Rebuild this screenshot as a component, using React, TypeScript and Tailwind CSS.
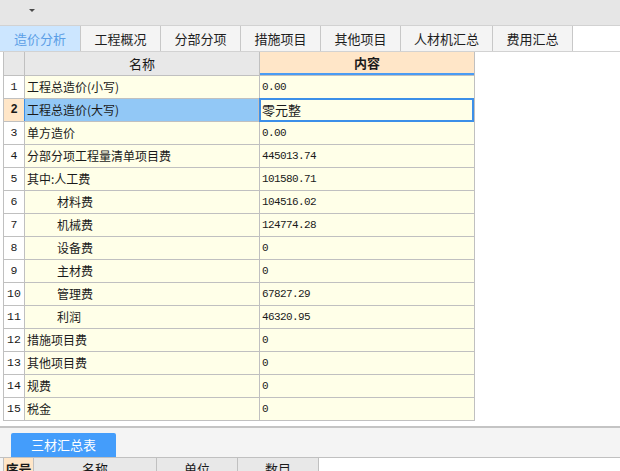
import React from "react"

const cjk = { fontFamily: '"Noto Sans CJK SC", "Noto Sans", sans-serif' }
const mono = { fontFamily: '"Liberation Mono", "Noto Sans CJK SC", monospace' }

const tabs = ["造价分析", "工程概况", "分部分项", "措施项目", "其他项目", "人材机汇总", "费用汇总"]
const tabWidths = ["w-[81px]", "w-[80px]", "w-[80px]", "w-[80px]", "w-[80px]", "w-[92px]", "w-[80px]"]

interface Row {
    name: string
    value: string
    indent?: boolean
}

const rows: Row[] = [
    { name: "工程总造价(小写)", value: "0.00" },
    { name: "工程总造价(大写)", value: "零元整" },
    { name: "单方造价", value: "0.00" },
    { name: "分部分项工程量清单项目费", value: "445013.74" },
    { name: "其中:人工费", value: "101580.71" },
    { name: "材料费", value: "104516.02", indent: true },
    { name: "机械费", value: "124774.28", indent: true },
    { name: "设备费", value: "0", indent: true },
    { name: "主材费", value: "0", indent: true },
    { name: "管理费", value: "67827.29", indent: true },
    { name: "利润", value: "46320.95", indent: true },
    { name: "措施项目费", value: "0" },
    { name: "其他项目费", value: "0" },
    { name: "规费", value: "0" },
    { name: "税金", value: "0" },
]

function App() {
    return (
        <div className="w-[620px] h-[471px] overflow-hidden bg-white text-[#1a1a1a]" style={cjk}>
            {/* top toolbar */}
            <div className="h-[25px] bg-[#e6e6e6] flex items-center pl-[29px]">
                <div className="w-0 h-0 border-l-[3.5px] border-r-[3.5px] border-t-[3px] border-l-transparent border-r-transparent border-t-[#4a4a4a] -mt-[4px]" />
            </div>

            {/* tab bar */}
            <div className="h-[27px] flex border-t border-b border-[#d2d2d2] bg-white">
                {tabs.map((t, i) => (
                    <div
                        key={t}
                        className={`${tabWidths[i]} flex items-center justify-center border-r border-[#c8c8c8] text-[13px] ${i === 0 ? "bg-[#cce6ff] text-[#5b9ee6]" : "bg-[#f4f4f4] text-[#1e1e1e]"}`}
                    >
                        {t}
                    </div>
                ))}
            </div>

            {/* main table */}
            <div className="ml-[3px] w-[472px] border-l border-r border-[#c0c0c0] text-[12px]">
                <div className="flex h-[24px] border-b border-[#c0c0c0]">
                    <div className="w-[21px] bg-[#e8e8e8] border-r border-[#c0c0c0]" />
                    <div className="w-[235px] bg-[#e8e8e8] border-r border-[#c0c0c0] flex items-center justify-center text-[13px]">名称</div>
                    <div className="flex-1 bg-[#ffe6c8] flex items-center justify-center font-bold text-[13px] border-b-2 border-[#4a9cf4]">内容</div>
                </div>
                {rows.map((r, i) => {
                    const sel = i === 1
                    return (
                        <div key={i} className="flex h-[23px] border-b border-[#c0c0c0]">
                            <div className={`w-[21px] border-r border-[#c0c0c0] flex items-center justify-center ${sel ? "bg-[#ffe6c8] font-bold text-[12px]" : "bg-white text-[11.5px]"}`} style={mono}>
                                {i + 1}
                            </div>
                            <div className={`w-[235px] border-r border-[#c0c0c0] flex items-center text-[12px] ${r.indent ? "pl-[32px]" : "pl-[2px]"} ${sel ? "bg-[#92c8f6] border-l border-l-[#3c8fe8] -ml-px" : "bg-[#ffffe8]"}`}>
                                {r.name}
                            </div>
                            <div className={`flex-1 bg-[#ffffe8] flex items-center ${sel ? "border-2 border-[#3c8fe8] pl-[1px] text-[13px] -my-px" : "pl-[2px] text-[11px] tracking-[-0.6px]"}`} style={sel ? cjk : mono}>
                                {r.value}
                            </div>
                        </div>
                    )
                })}
            </div>

            {/* bottom panel */}
            <div className="mt-[5px] border-t-2 border-[#c4c4c4] bg-[#f4f4f4]">
                <div className="pt-[5px] pl-[11px] border-b border-[#c0c0c0]">
                    <div className="w-[105px] h-[24px] bg-[#449dfb] rounded-t-[2px] text-white text-[13px] flex items-center justify-center">
                        三材汇总表
                    </div>
                </div>
                <div className="flex h-[22px] bg-white text-[13px]">
                    <div className="w-[3px] bg-[#f4f4f4]" />
                    <div className="w-[31px] bg-[#ffe6c8] border-l border-r border-[#c0c0c0] flex items-center justify-center font-bold">序号</div>
                    <div className="w-[123px] bg-[#e8e8e8] border-r border-[#c0c0c0] flex items-center justify-center">名称</div>
                    <div className="w-[81px] bg-[#e8e8e8] border-r border-[#c0c0c0] flex items-center justify-center">单位</div>
                    <div className="w-[81px] bg-[#e8e8e8] border-r border-[#c0c0c0] flex items-center justify-center">数目</div>
                </div>
            </div>
        </div>
    )
}

export default App
